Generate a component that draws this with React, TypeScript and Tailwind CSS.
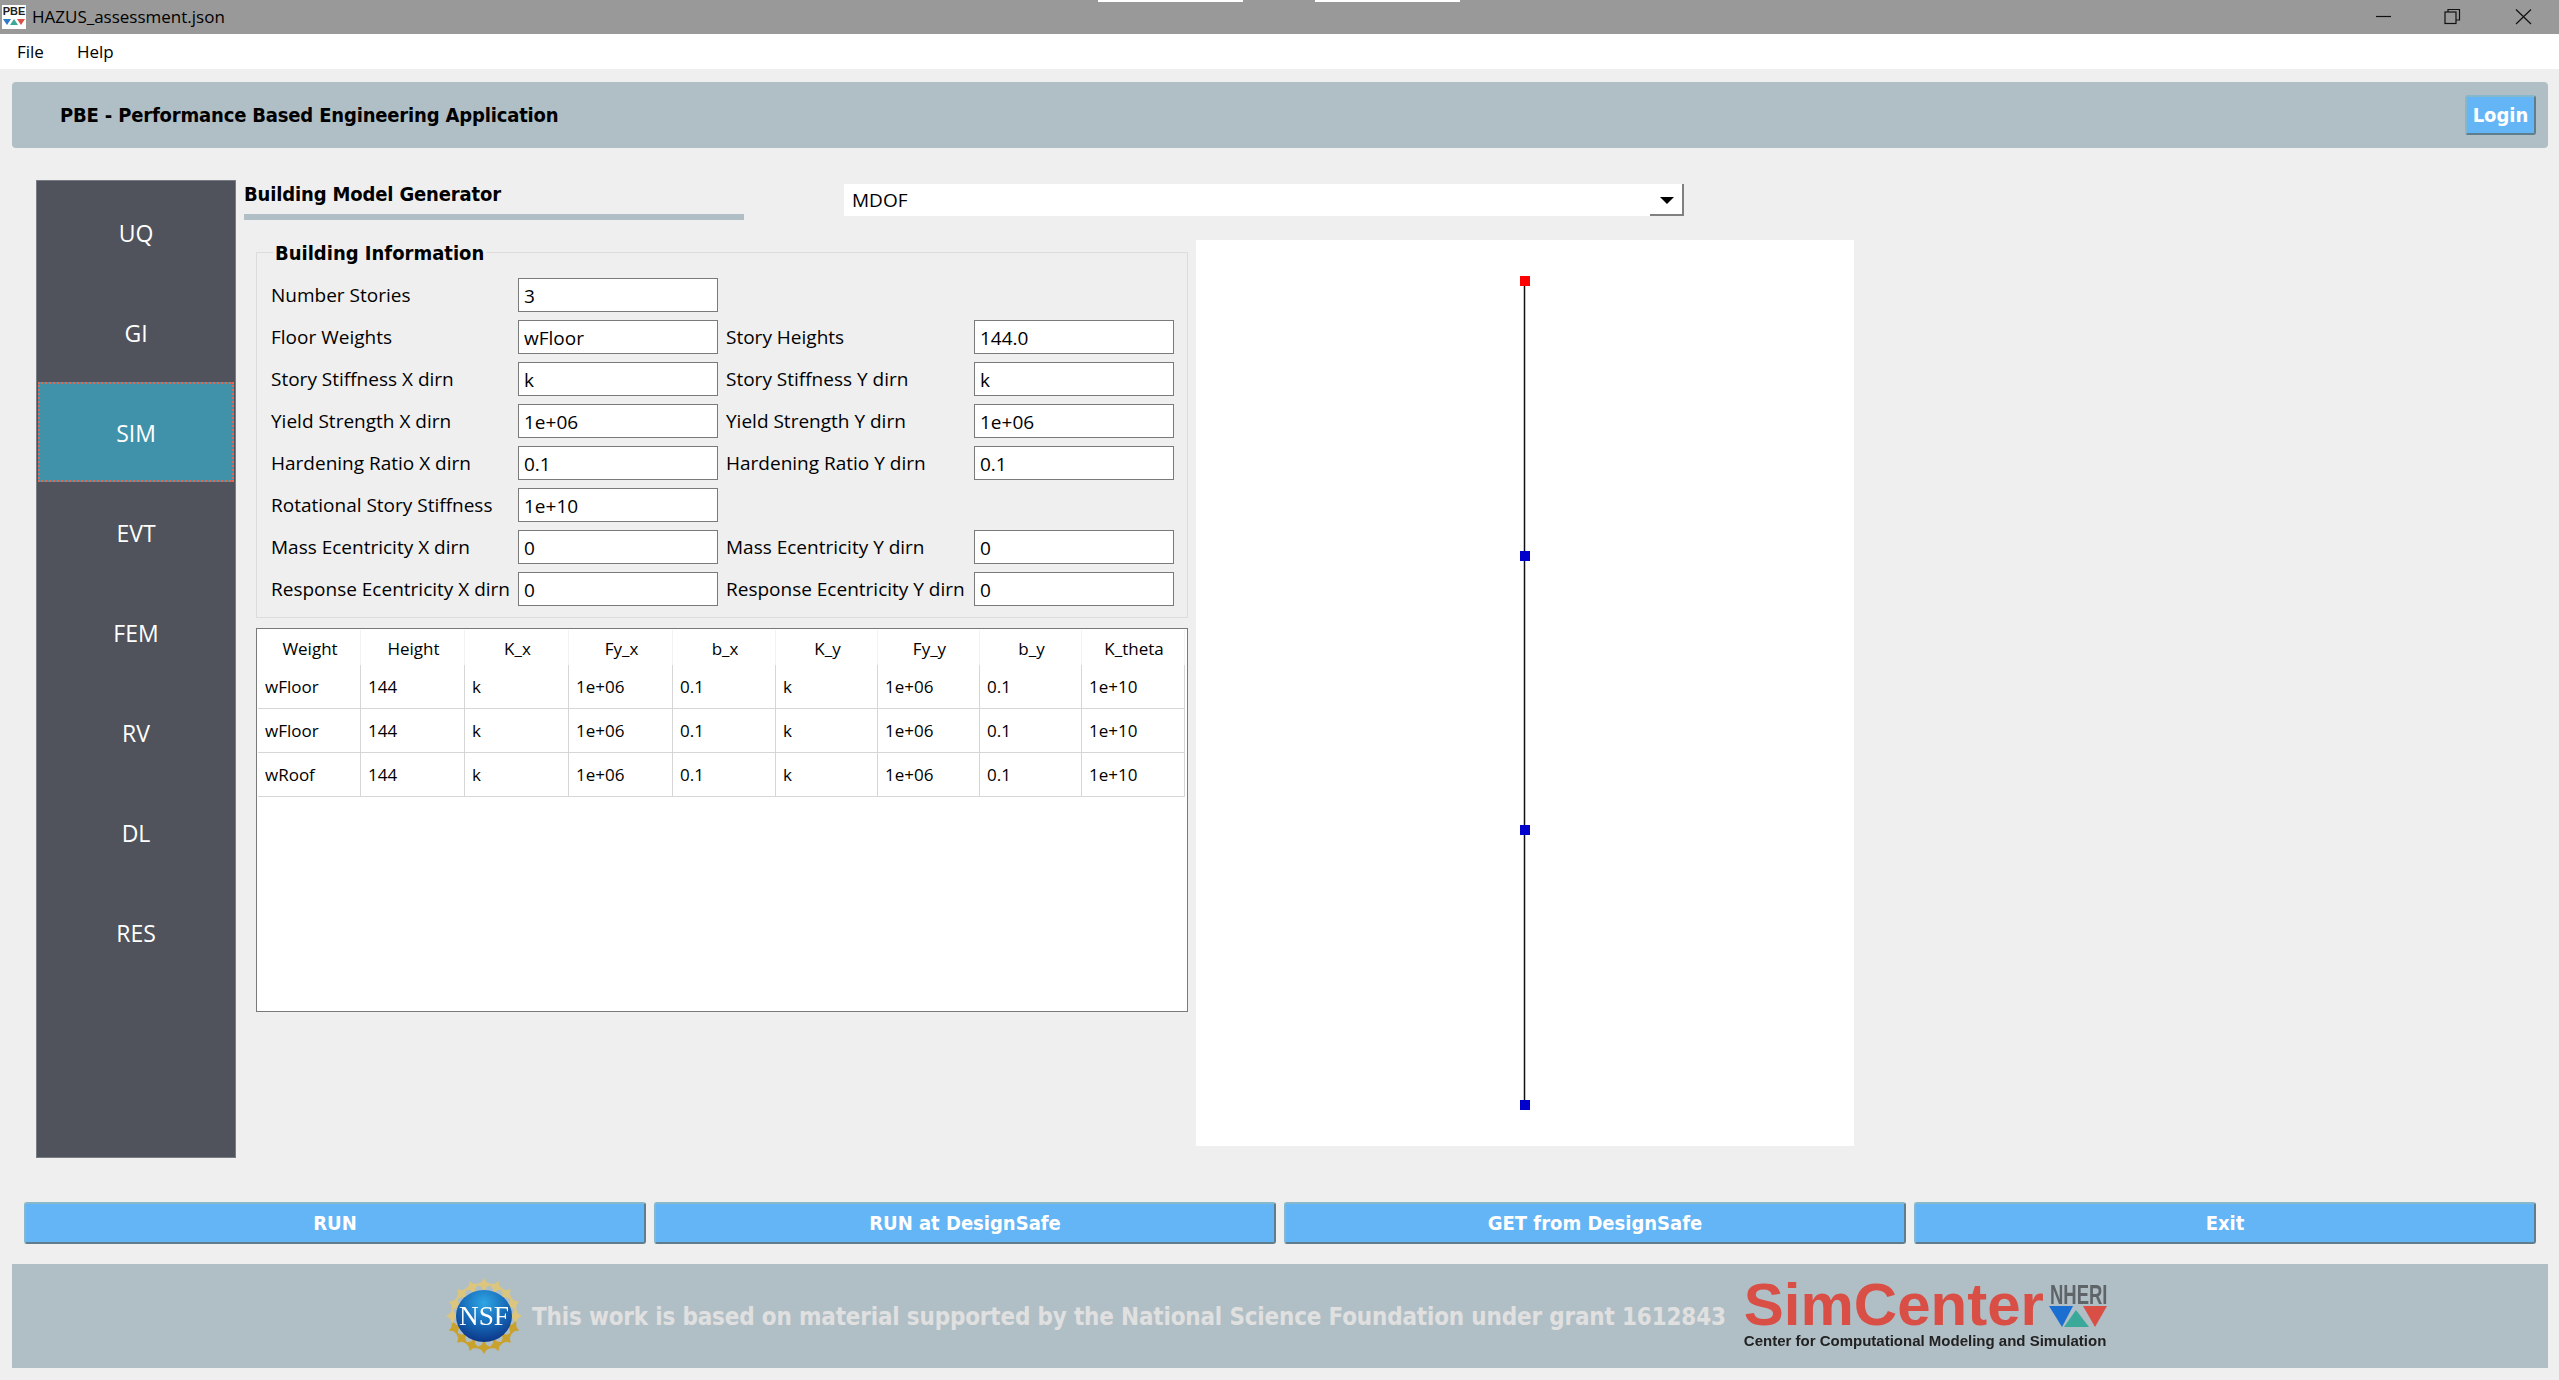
import React from 'react';

const sideItems = ['UQ', 'GI', 'SIM', 'EVT', 'FEM', 'RV', 'DL', 'RES'];

const formRows: [string, string, string?, string?][] = [
  ['Number Stories', '3'],
  ['Floor Weights', 'wFloor', 'Story Heights', '144.0'],
  ['Story Stiffness X dirn', 'k', 'Story Stiffness Y dirn', 'k'],
  ['Yield Strength X dirn', '1e+06', 'Yield Strength Y dirn', '1e+06'],
  ['Hardening Ratio X dirn', '0.1', 'Hardening Ratio Y dirn', '0.1'],
  ['Rotational Story Stiffness', '1e+10'],
  ['Mass Ecentricity X dirn', '0', 'Mass Ecentricity Y dirn', '0'],
  ['Response Ecentricity X dirn', '0', 'Response Ecentricity Y dirn', '0'],
];

const columns = ['Weight', 'Height', 'K_x', 'Fy_x', 'b_x', 'K_y', 'Fy_y', 'b_y', 'K_theta'];
const tableRows = [
  ['wFloor', '144', 'k', '1e+06', '0.1', 'k', '1e+06', '0.1', '1e+10'],
  ['wFloor', '144', 'k', '1e+06', '0.1', 'k', '1e+06', '0.1', '1e+10'],
  ['wRoof', '144', 'k', '1e+06', '0.1', 'k', '1e+06', '0.1', '1e+10'],
];

const actions = ['RUN', 'RUN at DesignSafe', 'GET from DesignSafe', 'Exit'];

const TextBox = ({ value }: { value: string }) => (
  <div className="flex h-[34px] w-[200px] items-center border border-[#7a7a7a] bg-white pt-[2px] pl-[5px] text-[19px] text-black">
    {value}
  </div>
);

const NsfLogo = () => {
  const stars = Array.from({ length: 16 }, (_, i) => i * 22.5);
  return (
    <svg width="76" height="76" viewBox="0 0 76 76" className="shrink-0 blur-[0.4px]">
      <defs>
        <radialGradient id="globe" cx="50%" cy="25%" r="80%">
          <stop offset="0%" stopColor="#2fa6e6" />
          <stop offset="55%" stopColor="#1566b4" />
          <stop offset="100%" stopColor="#0b2f83" />
        </radialGradient>
      </defs>
      {stars.map(r => (
        <polygon
          key={r}
          points="38,0 40.5,4 46,6.5 40.5,9 38,14 35.5,9 30,6.5 35.5,4"
          fill={r > 90 && r < 270 ? '#c9a22e' : '#dcc57c'}
          transform={`rotate(${r} 38 38)`}
        />
      ))}
      <ellipse cx="38" cy="38" rx="28" ry="26" fill="url(#globe)" />
      <text
        x="38"
        y="47"
        textAnchor="middle"
        fontFamily="'Liberation Serif', serif"
        fontSize="27"
        fill="#ffffff"
        textLength="50"
        lengthAdjust="spacingAndGlyphs"
      >
        NSF
      </text>
    </svg>
  );
};

const SimCenterLogo = () => (
  <div className="ml-[18px] flex w-[366px] shrink-0 flex-col blur-[0.4px]">
    <div className="flex h-[50px] items-start">
      <span className="font-['Liberation_Sans',sans-serif] text-[60px] leading-[44px] font-bold text-[#d94f45]">
        SimCenter
      </span>
      <svg width="60" height="46" viewBox="0 0 60 46" className="mt-[1px] ml-[5px] shrink-0">
        <text
          transform="translate(1 20) scale(0.66 1)"
          fontFamily="'Liberation Sans', sans-serif"
          fontSize="28"
          fontWeight="700"
          fill="#5f6468"
        >
          NHERI
        </text>
        <polygon points="0,22 24,22 13,43" fill="#1a6fd0" />
        <polygon points="15,43 27,26 40,43" fill="#3aa99a" />
        <polygon points="34,22 58,22 46,43" fill="#d94f45" />
      </svg>
    </div>
    <span className="font-['Liberation_Sans',sans-serif] text-[15px] leading-[16px] font-bold whitespace-nowrap text-[#222222]">
      Center for Computational Modeling and Simulation
    </span>
  </div>
);

const App: React.FC = () => {
  return (
    <div className="flex h-screen w-full flex-col overflow-hidden bg-[#efefef] font-['Open_Sans',sans-serif] text-black">
      {/* Title bar */}
      <div className="relative flex h-[34px] shrink-0 items-center bg-[#999999] pl-[2px]">
        <div className="flex h-[24px] w-[24px] flex-col items-center bg-white">
          <span className="font-['Liberation_Sans',sans-serif] text-[11px] leading-[13px] font-bold text-[#222222]">PBE</span>
          <svg width="24" height="9" viewBox="0 0 24 9">
            <polygon points="1,1 9,1 5,7" fill="#2f77c9" />
            <polygon points="8,7 12,1 16,7" fill="#3aa99a" />
            <polygon points="15,1 23,1 19,7" fill="#d94f45" />
          </svg>
        </div>
        <span className="ml-[6px] text-[17px] text-black">HAZUS_assessment.json</span>
        <div className="absolute top-0 left-[1098px] h-[2px] w-[145px] bg-white" />
        <div className="absolute top-0 left-[1315px] h-[2px] w-[145px] bg-white" />
        <div className="ml-auto flex items-center">
          <svg width="210" height="34" viewBox="0 0 210 34" fill="none" stroke="#111111" strokeWidth="1.2">
            <path d="M27 16.5h15" />
            <rect x="96" y="12" width="11" height="11.5" />
            <path d="M99 12V9.5h11.5V20H107" />
            <path d="M167 9.5l15 14.5M182 9.5L167 24" />
          </svg>
        </div>
      </div>

      {/* Menu bar */}
      <div className="flex h-[35px] shrink-0 items-center gap-[33px] bg-white pl-[17px] text-[17px] text-black">
        <span>File</span>
        <span>Help</span>
      </div>

      {/* Header */}
      <div className="mt-[13px] mr-[11px] ml-[12px] flex h-[66px] shrink-0 items-center justify-between rounded-[4px] bg-[#b0bec5] pr-[12px] pl-[48px] font-['DejaVu_Sans_Condensed','DejaVu_Sans',sans-serif]">
        <span className="text-[20px] font-bold tracking-[-0.17px]">PBE - Performance Based Engineering Application</span>
        <button className="flex h-[40px] w-[71px] items-center justify-center rounded-[3px] border-2 border-t-[#86b8cc] border-r-[#607d8b] border-b-[#607d8b] border-l-[#86b8cc] bg-[#64b5f6] text-[20px] font-bold text-white">
          Login
        </button>
      </div>

      {/* Main area */}
      <div className="mt-[32px] ml-[36px] flex h-[978px] shrink-0">
        <div className="flex w-[200px] flex-col items-stretch border border-[#787c84] bg-[#50535b] p-[1px]">
          {sideItems.map(item =>
            item === 'SIM' ? (
              <div
                key={item}
                className="flex h-[100px] shrink-0 items-center justify-center border-2 border-dotted border-[#e0684f] bg-[#3f92aa] pt-[2px] text-[23px] text-white"
              >
                {item}
              </div>
            ) : (
              <div key={item} className="flex h-[100px] shrink-0 items-center justify-center pt-[2px] text-[23px] text-white">
                {item}
              </div>
            ),
          )}
        </div>

        <div className="ml-[8px] flex flex-col">
          <div className="flex">
            <div className="flex h-[40px] w-[500px] items-center border-b-[6px] border-[#b0bec5] pb-[7px] font-['DejaVu_Sans_Condensed','DejaVu_Sans',sans-serif] text-[20px] font-bold tracking-[-0.15px]">
              Building Model Generator
            </div>
            <div className="relative mt-[4px] ml-[100px] flex h-[32px] w-[840px] items-center justify-between border-r-2 border-[#808080] bg-white pr-[8px] pl-[8px] text-[19px]">
              <span>MDOF</span>
              <span className="h-0 w-0 border-t-[7px] border-r-[7px] border-l-[7px] border-t-black border-r-transparent border-l-transparent" />
              <span className="absolute right-0 bottom-0 h-[2px] w-[32px] bg-[#808080]" />
            </div>
          </div>

          <div className="mt-[20px] flex">
            <div className="ml-[12px] flex w-[935px] flex-col pt-[12px]">
              {/* Building Information */}
              <div className="relative flex h-[366px] w-[932px] flex-col gap-[8px] border border-[#dcdcdc] pt-[25px] pl-[14px]">
                <span className="absolute top-[-13px] left-[16px] bg-[#efefef] px-[2px] font-['DejaVu_Sans_Condensed','DejaVu_Sans',sans-serif] text-[20px] leading-[26px] font-bold">
                  Building Information
                </span>
                {formRows.map(([l1, v1, l2, v2]) => (
                  <div key={l1} className="flex h-[34px] items-center text-[19px]">
                    <span className="w-[247px] whitespace-nowrap">{l1}</span>
                    <TextBox value={v1} />
                    {l2 && v2 && (
                      <>
                        <span className="ml-[8px] w-[248px] whitespace-nowrap">{l2}</span>
                        <TextBox value={v2} />
                      </>
                    )}
                  </div>
                ))}
              </div>

              {/* Table */}
              <div className="mt-[10px] flex h-[384px] w-[932px] flex-col border border-[#7a7a7a] bg-white pt-[1px] pl-[1px]">
                <div className="grid h-[35px] grid-cols-[103px_104px_104px_104px_103px_102px_102px_102px_103px] text-[17px]">
                  {columns.map(c => (
                    <span key={c} className="flex items-center justify-center border-r border-[#f2f2f2] pt-[2px] pl-[2px]">
                      {c}
                    </span>
                  ))}
                </div>
                {tableRows.map((row, i) => (
                  <div
                    key={i}
                    className="grid h-[44px] grid-cols-[103px_104px_104px_104px_103px_102px_102px_102px_103px] text-[17px]"
                  >
                    {row.map((cell, j) => (
                      <span key={j} className="flex items-center border-r border-b border-[#d6d6d6] pl-[7px]">
                        {cell}
                      </span>
                    ))}
                  </div>
                ))}
              </div>
            </div>

            {/* Model preview */}
            <div className="ml-[5px] h-[906px] w-[658px] bg-white">
              <svg width="658" height="906" viewBox="0 0 658 906">
                <path d="M328.5 41V865" stroke="#111111" strokeWidth="1.5" />
                <rect x="324" y="36" width="10" height="10" fill="#ff0000" />
                <rect x="324" y="311" width="10" height="10" fill="#0000cc" />
                <rect x="324" y="585" width="10" height="10" fill="#0000cc" />
                <rect x="324" y="860" width="10" height="10" fill="#0000cc" />
              </svg>
            </div>
          </div>
        </div>
      </div>

      {/* Actions */}
      <div className="mt-[44px] flex shrink-0 gap-[8px] pl-[24px]">
        {actions.map(a => (
          <button
            key={a}
            className="h-[42px] w-[622px] shrink-0 rounded-[3px] border-2 border-t-[#86b8cc] border-r-[#607d8b] border-b-[#607d8b] border-l-[#86b8cc] bg-[#64b5f6] font-['DejaVu_Sans_Condensed','DejaVu_Sans',sans-serif] text-[20px] font-bold text-white"
          >
            {a}
          </button>
        ))}
      </div>

      {/* Footer */}
      <div className="mt-[20px] mr-[11px] ml-[12px] flex h-[104px] shrink-0 items-center bg-[#b0bec5] pl-[434px]">
        <NsfLogo />
        <span className="ml-[10px] pt-[2px] font-['DejaVu_Sans_Condensed','DejaVu_Sans',sans-serif] text-[24px] font-bold tracking-[-0.19px] whitespace-nowrap text-[#e0e0e0]">
          This work is based on material supported by the National Science Foundation under grant 1612843
        </span>
        <SimCenterLogo />
      </div>
    </div>
  );
};

export default App;
